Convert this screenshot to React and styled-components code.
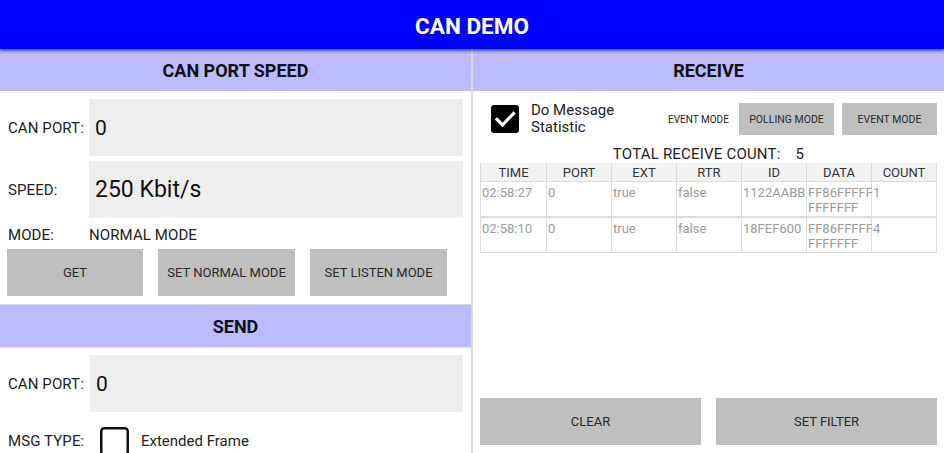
import React from "react";
import styled, { createGlobalStyle } from "styled-components";

const Global = createGlobalStyle`
  html, body { margin: 0; padding: 0; background: #fff; }
  body { font-family: Roboto, "Liberation Sans", sans-serif; overflow: hidden; }
  * { box-sizing: border-box; }
`;

const Screen = styled.div`
  width: 944px;
  height: 453px;
  display: flex;
  flex-direction: column;
  overflow: hidden;
  background: #fff;
`;

const TitleBar = styled.div`
  height: 49px;
  flex: none;
  background: #0000ff;
  color: #fff;
  font-weight: 700;
  font-size: 22.5px;
  display: flex;
  align-items: center;
  justify-content: center;
  padding-top: 2px;
  position: relative;
  z-index: 2;
  box-shadow: 0 2px 3px rgba(0, 0, 0, 0.55);
`;

const Body = styled.div`
  flex: 1;
  display: flex;
  min-height: 0;
`;

const LeftCol = styled.div`
  width: 473px;
  flex: none;
  display: flex;
  flex-direction: column;
  overflow: hidden;
  border-right: 2px solid #dadada;
  & > * { flex-shrink: 0; }
`;

const RightCol = styled.div`
  flex: 1;
  display: flex;
  flex-direction: column;
  padding-bottom: 8px;
`;

const SectionHead = styled.div`
  height: ${(p) => (p.$bordered ? 44 : 42)}px;
  flex: none;
  background: #bbbbff;
  color: #111;
  font-weight: 700;
  font-size: 18px;
  display: flex;
  align-items: center;
  justify-content: center;
  ${(p) => p.$bordered && "border-top: 1px solid #d6d6e6; border-bottom: 1px solid #e2e2f0;"}
`;

const FieldRow = styled.div`
  display: flex;
  align-items: center;
  height: 57px;
  margin: ${(p) => p.$mt}px 8px 0 8px;
`;

const Label = styled.div`
  width: ${(p) => p.$w || 81}px;
  flex: none;
  font-size: 15px;
  letter-spacing: 0.1px;
  color: #222;
`;

const InputBox = styled.div`
  flex: 1;
  align-self: stretch;
  background: #eeeeee;
  display: flex;
  align-items: center;
  padding-left: 6px;
  font-size: ${(p) => p.$fs || 21}px;
  color: #111;
`;

const ModeRow = styled.div`
  display: flex;
  align-items: center;
  height: 31px;
  padding: 2px 8px 0 8px;
  font-size: 15px;
  letter-spacing: 0.1px;
  color: #222;
`;

const ButtonRow = styled.div`
  display: flex;
  flex: none;
  gap: ${(p) => p.$gap || 15}px;
  padding: ${(p) => p.$pad || "0 0 0 7px"};
`;

const GrayButton = styled.div`
  width: ${(p) => (p.$w ? p.$w + "px" : "auto")};
  flex: ${(p) => (p.$w ? "none" : 1)};
  height: ${(p) => p.$h || 47}px;
  background: #bfbfbf;
  color: #2a2a2a;
  font-size: ${(p) => p.$fs || 13}px;
  display: flex;
  align-items: center;
  justify-content: center;
  white-space: nowrap;
`;

const Separator = styled.div`
  height: 8px;
  flex: none;
`;

const CheckRow = styled.div`
  display: flex;
  align-items: center;
  margin: 15px 8px 0 8px;
  height: 28px;
  font-size: 15px;
  color: #222;
`;

const CheckLabel = styled.span`
  margin-left: 12px;
`;

const OptionsRow = styled.div`
  display: flex;
  flex: none;
  align-items: center;
  height: 32px;
  margin-top: 12px;
  padding: 0 7px 0 18px;
`;

const StatText = styled.div`
  margin-left: 12px;
  font-size: 15px;
  line-height: 17px;
  color: #222;
  width: 125px;
`;

const SmallLabel = styled.div`
  font-size: 10px;
  color: #222;
  width: 63px;
  overflow: hidden;
  white-space: nowrap;
  margin-right: 8px;
`;

const CountLine = styled.div`
  height: 18px;
  flex: none;
  margin-top: 10px;
  display: flex;
  align-items: center;
  justify-content: center;
  gap: 15px;
  font-size: 15px;
  letter-spacing: 0.2px;
  color: #222;
`;

const Table = styled.div`
  margin: 0 7px;
  flex: none;
  display: grid;
  grid-template-columns: 65px repeat(5, 64px) 1fr;
  column-gap: 1px;
  row-gap: 1px;
  background: #dcdcdc;
  border: 1px solid #dcdcdc;
  border-top: 0;
`;

const HeadCell = styled.div`
  background: #f2f2f2;
  height: 18px;
  font-size: 13px;
  color: #333;
  display: flex;
  align-items: center;
  justify-content: center;
`;

const Cell = styled.div`
  background: #fff;
  height: 34px;
  font-size: 13px;
  line-height: 15px;
  color: #9a9a9a;
  padding: 3px 0 0 1px;
  white-space: nowrap;
  ${(p) => p.$rowGap && "margin-top: 1px;"}
`;

const Spacer = styled.div`
  flex: 1;
`;

const CheckedBox = () => (
  <svg width="28" height="28" viewBox="0 0 28 28">
    <rect x="0" y="0" width="28" height="28" rx="3" fill="#000" />
    <path d="M6 14.5 L11.5 20 L22.5 8.5" stroke="#fff" strokeWidth="3.2" fill="none" strokeLinecap="square" />
  </svg>
);

const EmptyBox = () => (
  <svg width="29" height="28" viewBox="0 0 29 28">
    <rect x="1.25" y="1.25" width="26.5" height="26.5" rx="3" fill="#fff" stroke="#111" strokeWidth="2.5" />
  </svg>
);

const rows = [
  ["02:58:27", "0", "true", "false", "1122AABB", "FF86FFFFF", "FFFFFFF", "1"],
  ["02:58:10", "0", "true", "false", "18FEF600", "FF86FFFFF", "FFFFFFF", "4"],
];

export default function App() {
  return (
    <Screen>
      <Global />
      <TitleBar>CAN DEMO</TitleBar>
      <Body>
        <LeftCol>
          <SectionHead>CAN PORT SPEED</SectionHead>
          <FieldRow $mt={8}>
            <Label>CAN PORT:</Label>
            <InputBox>0</InputBox>
          </FieldRow>
          <FieldRow $mt={5}>
            <Label>SPEED:</Label>
            <InputBox $fs={23}>250 Kbit/s</InputBox>
          </FieldRow>
          <ModeRow>
            <Label>MODE:</Label>
            <span>NORMAL MODE</span>
          </ModeRow>
          <ButtonRow>
            <GrayButton $w={136}>GET</GrayButton>
            <GrayButton $w={137}>SET NORMAL MODE</GrayButton>
            <GrayButton $w={137}>SET LISTEN MODE</GrayButton>
          </ButtonRow>
          <Separator />
          <SectionHead $bordered>SEND</SectionHead>
          <FieldRow $mt={7}>
            <Label $w={82}>CAN PORT:</Label>
            <InputBox>0</InputBox>
          </FieldRow>
          <CheckRow>
            <Label $w={92}>MSG TYPE:</Label>
            <EmptyBox />
            <CheckLabel>Extended Frame</CheckLabel>
          </CheckRow>
        </LeftCol>
        <RightCol>
          <SectionHead>RECEIVE</SectionHead>
          <OptionsRow>
            <CheckedBox />
            <StatText>
              Do Message
              <br />
              Statistic
            </StatText>
            <Spacer />
            <SmallLabel>EVENT MODE</SmallLabel>
            <ButtonRow $gap={8} $pad="0">
              <GrayButton $w={95} $h={32} $fs={10.5}>POLLING MODE</GrayButton>
              <GrayButton $w={95} $h={32} $fs={10.5}>EVENT MODE</GrayButton>
            </ButtonRow>
          </OptionsRow>
          <CountLine>
            <span>TOTAL RECEIVE COUNT:</span>
            <span>5</span>
          </CountLine>
          <Table>
            {["TIME", "PORT", "EXT", "RTR", "ID", "DATA", "COUNT"].map((h) => (
              <HeadCell key={h}>{h}</HeadCell>
            ))}
            {rows.map((r, i) => (
              <React.Fragment key={i}>
                {r.slice(0, 5).map((v, j) => (
                  <Cell key={j} $rowGap={i > 0}>{v}</Cell>
                ))}
                <Cell $rowGap={i > 0}>
                  {r[5]}
                  <br />
                  {r[6]}
                </Cell>
                <Cell $rowGap={i > 0}>{r[7]}</Cell>
              </React.Fragment>
            ))}
          </Table>
          <Spacer />
          <ButtonRow $pad="0 7px" $gap={15}>
            <GrayButton>CLEAR</GrayButton>
            <GrayButton>SET FILTER</GrayButton>
          </ButtonRow>
        </RightCol>
      </Body>
    </Screen>
  );
}
